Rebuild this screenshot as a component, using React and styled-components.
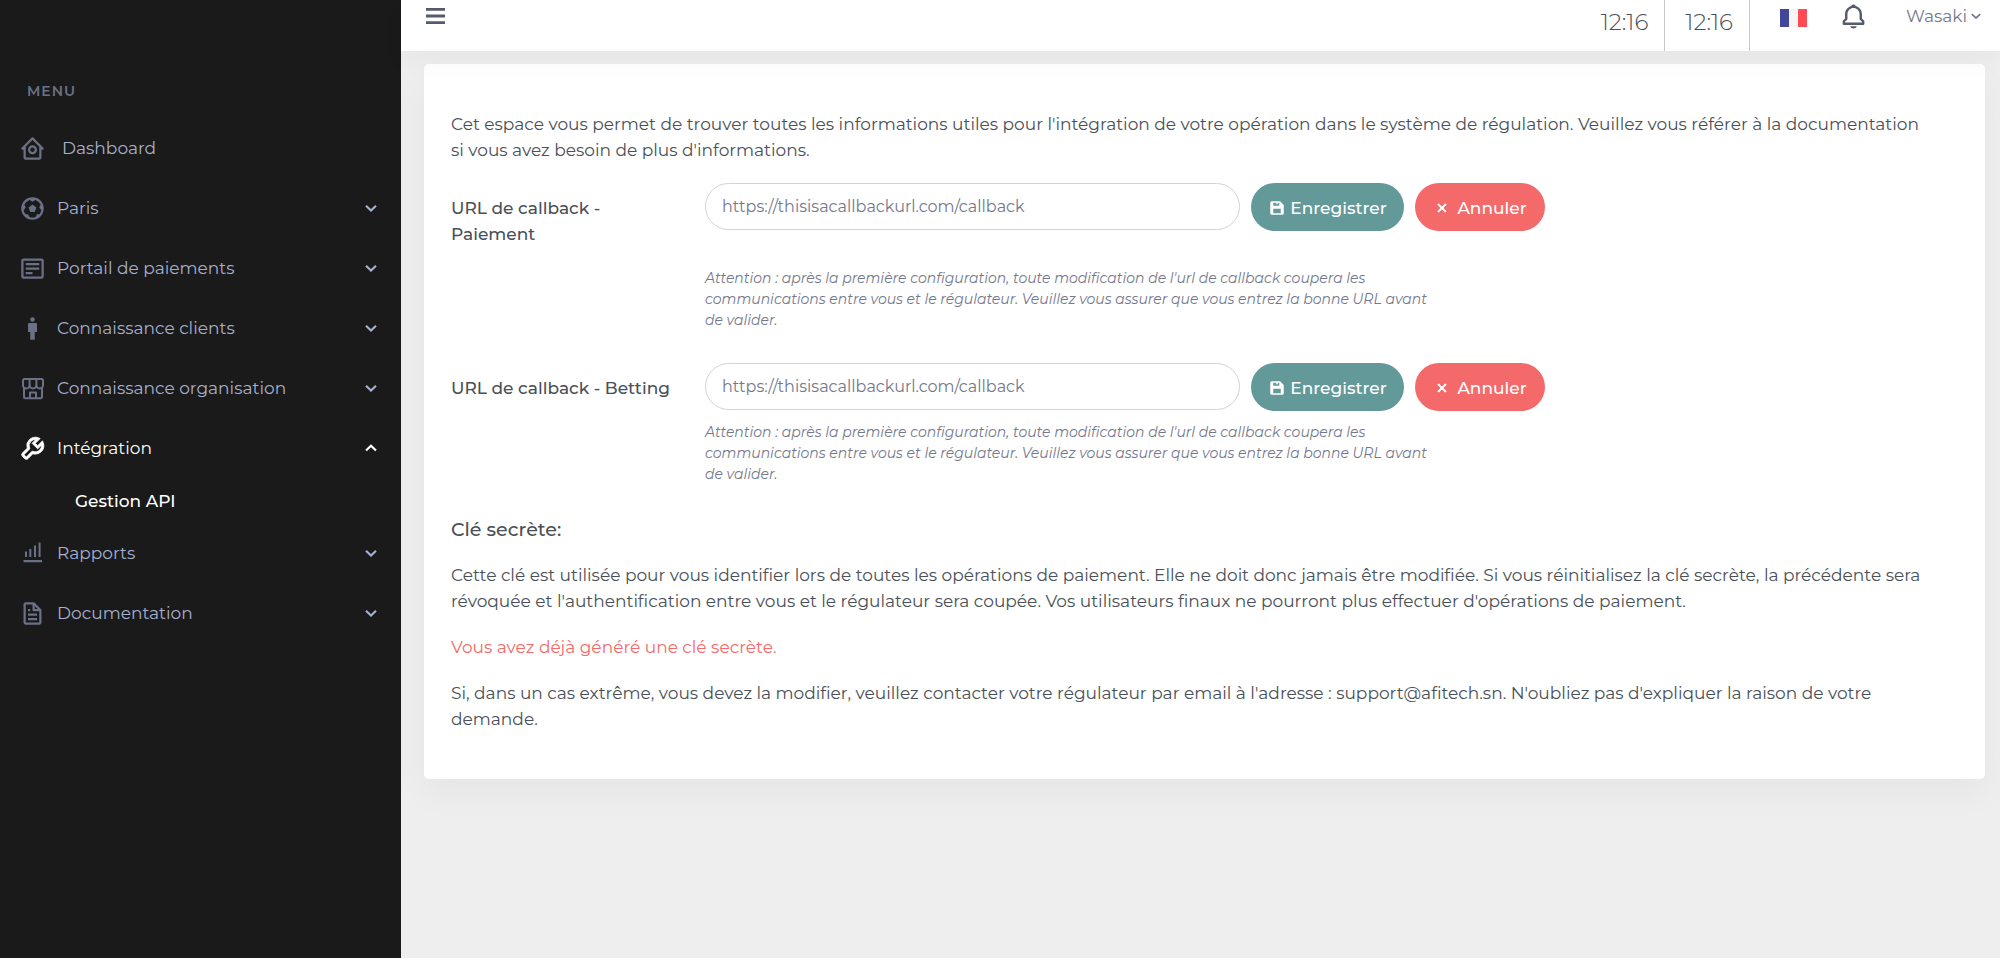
import React, { useState } from 'react';
import styled, { createGlobalStyle } from 'styled-components';
import {
  BiBell,
  BiDetail,
  BiFile,
  BiFootball,
  BiHomeCircle,
  BiMale,
  BiSolidSave,
  BiWrench,
  BiX,
} from 'react-icons/bi';

const GlobalStyle = createGlobalStyle`
  * {
    box-sizing: border-box;
  }

  body {
    margin: 0;
    background: #eeeeee;
    color: #495057;
    font-family: Montserrat, Inter, sans-serif;
    font-size: 17px;
    line-height: 26px;
  }

  button,
  input {
    font-family: inherit;
  }
`;

const Page = styled.div`
  display: flex;
  min-height: 100vh;
`;

const Sidebar = styled.aside`
  flex: 0 0 401px;
  padding-top: 78px;
  background: #1a1a1a;
`;

const MenuTitle = styled.h2`
  margin: 0 0 14px;
  padding: 0 27px;
  color: #6a7187;
  font-size: 14px;
  font-weight: 600;
  letter-spacing: 1px;
`;

const MenuList = styled.ul`
  margin: 0;
  padding: 0;
  list-style: none;
`;

const MenuItem = styled.a`
  display: flex;
  align-items: center;
  width: 100%;
  height: 60px;
  padding: 0 24px 0 19px;
  border: 0;
  background: none;
  color: ${({ $active }) => ($active ? '#ffffff' : '#a6b0cf')};
  font-size: 17px;
  line-height: 26px;
  text-align: left;
  text-decoration: none;
  cursor: pointer;

  svg:first-child {
    flex: none;
    color: ${({ $active }) => ($active ? '#ffffff' : '#6a7187')};
    stroke-width: ${({ $active }) => ($active ? '0.8' : '0')};
  }
`;

const MenuLabel = styled.span`
  flex: 1;
  padding-left: ${({ $wide }) => ($wide ? '16px' : '11px')};
`;

const SubItem = styled.a`
  display: flex;
  align-items: center;
  height: 45px;
  padding-left: 75px;
  color: #ffffff;
  font-weight: 500;
  text-decoration: none;
`;

const Main = styled.div`
  flex: 1;
  min-width: 0;
`;

const Header = styled.header`
  position: relative;
  display: flex;
  justify-content: space-between;
  height: 51px;
  padding: 0 19px 0 25px;
  background: #ffffff;
  box-shadow: 0 12px 24px rgba(0, 0, 0, 0.03);
`;

const HeaderGroup = styled.div`
  display: flex;
`;

const HeaderButton = styled.button`
  display: flex;
  align-items: center;
  height: 32px;
  padding: 0;
  border: 0;
  background: none;
  color: #555b6d;
  cursor: pointer;
`;

const UserButton = styled(HeaderButton)`
  gap: 4px;
  padding-left: 6px;
  color: #74788d;
  font-size: 17px;
`;

const Clock = styled.time`
  display: flex;
  align-items: center;
  padding: 0 16px 8px 20px;
  border-right: 1px solid #c8c8c8;
  font-size: 23px;
  font-weight: 300;
`;

const HeaderActions = styled.div`
  display: flex;
  gap: 32px;
  padding-left: 30px;
`;

const Card = styled.main`
  margin: 13px 15px 24px 23px;
  padding: 47px 27px;
  border-radius: 5px;
  background: #ffffff;
  box-shadow: 0 15px 36px rgba(0, 0, 0, 0.04);
`;

const Paragraph = styled.p`
  margin: 0 0 20px;
  padding-right: 28px;
  color: ${({ $danger }) => ($danger ? '#f46a6a' : '#495057')};

  &:last-child {
    margin-bottom: 0;
  }
`;

const SectionTitle = styled.h1`
  margin: 0 0 19px;
  font-size: 19px;
  font-weight: 500;
  line-height: 26px;
`;

const Field = styled.form`
  display: grid;
  grid-template-columns: 254px minmax(0, 535px) auto auto 1fr;
  align-items: start;
  gap: 11px 0;
  margin-bottom: 32px;
`;

const FieldLabel = styled.label`
  padding: 12px 20px 10px 0;
  font-weight: 500;
`;

const UrlInput = styled.input`
  width: 100%;
  height: 47px;
  padding: 0 16px;
  border: 1px solid #ced4da;
  border-radius: 24px;
  background: #ffffff;
  color: #495057;
  font-size: 16px;

  &::placeholder {
    color: #74788d;
    opacity: 1;
  }
`;

const Button = styled.button`
  display: flex;
  align-items: center;
  justify-content: center;
  gap: ${({ $danger }) => ($danger ? '6px' : '4px')};
  width: ${({ $danger }) => ($danger ? '130px' : '153px')};
  height: 48px;
  margin-left: 11px;
  padding: 2px 0 0;
  border: 0;
  border-radius: 24px;
  background: ${({ $danger }) => ($danger ? '#f46a6a' : '#64999a')};
  color: #ffffff;
  font-size: 17px;
  font-weight: 500;
  cursor: pointer;
`;

const Hint = styled.small`
  grid-column: 2 / -1;
  max-width: 736px;
  color: #74788d;
  font-size: 14px;
  font-style: italic;
  line-height: 21px;
`;

const Chevron = ({ up, size = 12 }) => (
  <svg width={size} height={size} viewBox="0 0 12 12" fill="none" aria-hidden="true">
    <path
      d={up ? 'M1 8.5 6 3.8l5 4.7' : 'M1 3.8 6 8.5l5-4.7'}
      stroke="currentColor"
      strokeWidth="2.2"
    />
  </svg>
);

const StoreIcon = ({ size }) => (
  <svg width={size} height={size} viewBox="0 0 27 27" fill="none" aria-hidden="true">
    <g stroke="currentColor" strokeWidth="2" strokeLinejoin="round">
      <path d="M4 5.5A1.5 1.5 0 0 1 5.5 4h17A1.5 1.5 0 0 1 24 5.5v5a3.3 3 0 0 1-6.6 0 3.4 3 0 0 1-6.8 0 3.3 3 0 0 1-6.6 0z" />
      <path d="M10.6 4v6.5M17.4 4v6.5" />
      <path d="M5 13v8.7a1.5 1.5 0 0 0 1.5 1.5h15a1.5 1.5 0 0 0 1.5-1.5V13" />
      <path d="M11 23v-5.5h6V23" />
    </g>
  </svg>
);

const ReportIcon = ({ size }) => (
  <svg width={size} height={size} viewBox="0 0 27 27" fill="currentColor" aria-hidden="true">
    <path d="M6 11.5h2V17H6zM10.3 9h2v8h-2zM15 5.5h2V17h-2zM19.6 2.5h2V17h-2zM4.5 20H23v2.3H4.5z" />
  </svg>
);

const FlagIcon = () => (
  <svg width="27" height="32" viewBox="0 0 27 32" role="img" aria-label="Français">
    <path fill="#41479b" d="M0 9h9v18H0z" />
    <path fill="#f5f5f5" d="M9 9h9v18H9z" />
    <path fill="#ff4b55" d="M18 9h9v18h-9z" />
  </svg>
);

const MenuIcon = () => (
  <svg width="20" height="18" viewBox="0 0 20 18" aria-hidden="true">
    <path d="M0 2.3h19M0 9h19M0 15.7h19" stroke="currentColor" strokeWidth="2.8" />
  </svg>
);

const groups = [
  { name: 'Paris', Icon: BiFootball },
  { name: 'Portail de paiements', Icon: BiDetail },
  { name: 'Connaissance clients', Icon: BiMale },
  { name: 'Connaissance organisation', Icon: StoreIcon },
  { name: 'Intégration', Icon: BiWrench, links: ['Gestion API'] },
  { name: 'Rapports', Icon: ReportIcon },
  { name: 'Documentation', Icon: BiFile },
];

const SideMenu = () => {
  const [opened, setOpened] = useState('Intégration');

  return (
    <Sidebar>
      <nav>
        <MenuTitle>MENU</MenuTitle>
        <MenuList>
          <li>
            <MenuItem href="#dashboard">
              <BiHomeCircle size={27} />
              <MenuLabel $wide>Dashboard</MenuLabel>
            </MenuItem>
          </li>
          {groups.map(({ name, Icon, links = [] }) => {
            const active = opened === name;
            return (
              <li key={name}>
                <MenuItem
                  as="button"
                  type="button"
                  $active={active}
                  aria-expanded={active}
                  onClick={() => setOpened(active ? null : name)}
                >
                  <Icon size={27} />
                  <MenuLabel>{name}</MenuLabel>
                  <Chevron up={active} />
                </MenuItem>
                {active &&
                  links.map(link => (
                    <SubItem key={link} href="#api">
                      {link}
                    </SubItem>
                  ))}
              </li>
            );
          })}
        </MenuList>
      </nav>
    </Sidebar>
  );
};

const CallbackField = ({ id, label }) => (
  <Field onSubmit={event => event.preventDefault()}>
    <FieldLabel htmlFor={id}>{label}</FieldLabel>
    <UrlInput id={id} type="url" placeholder="https://thisisacallbackurl.com/callback" />
    <Button type="submit">
      <BiSolidSave size={18} />
      Enregistrer
    </Button>
    <Button type="reset" $danger>
      <BiX size={18} strokeWidth={1} />
      Annuler
    </Button>
    <Hint>
      Attention : après la première configuration, toute modification de l'url de callback coupera
      les communications entre vous et le régulateur. Veuillez vous assurer que vous entrez la bonne
      URL avant de valider.
    </Hint>
  </Field>
);

const App = () => (
  <>
    <GlobalStyle />
    <Page>
      <SideMenu />
      <Main>
        <Header>
          <HeaderButton type="button" aria-label="Menu">
            <MenuIcon />
          </HeaderButton>
          <HeaderGroup>
            <Clock>12:16</Clock>
            <Clock>12:16</Clock>
            <HeaderActions>
              <HeaderButton type="button">
                <FlagIcon />
              </HeaderButton>
              <HeaderButton type="button" aria-label="Notifications">
                <BiBell size={29} />
              </HeaderButton>
              <UserButton type="button">
                Wasaki
                <Chevron size={10} />
              </UserButton>
            </HeaderActions>
          </HeaderGroup>
        </Header>
        <Card>
          <Paragraph>
            Cet espace vous permet de trouver toutes les informations utiles pour l'intégration de
            votre opération dans le système de régulation. Veuillez vous référer à la documentation
            si vous avez besoin de plus d'informations.
          </Paragraph>
          <CallbackField id="callback-payment" label="URL de callback - Paiement" />
          <CallbackField id="callback-betting" label="URL de callback - Betting" />
          <SectionTitle>Clé secrète:</SectionTitle>
          <Paragraph>
            Cette clé est utilisée pour vous identifier lors de toutes les opérations de paiement.
            Elle ne doit donc jamais être modifiée. Si vous réinitialisez la clé secrète, la
            précédente sera révoquée et l'authentification entre vous et le régulateur sera coupée.
            Vos utilisateurs finaux ne pourront plus effectuer d'opérations de paiement.
          </Paragraph>
          <Paragraph $danger>Vous avez déjà généré une clé secrète.</Paragraph>
          <Paragraph>
            Si, dans un cas extrême, vous devez la modifier, veuillez contacter votre régulateur par
            email à l'adresse : support@afitech.sn. N'oubliez pas d'expliquer la raison de votre
            demande.
          </Paragraph>
        </Card>
      </Main>
    </Page>
  </>
);

export default App;
